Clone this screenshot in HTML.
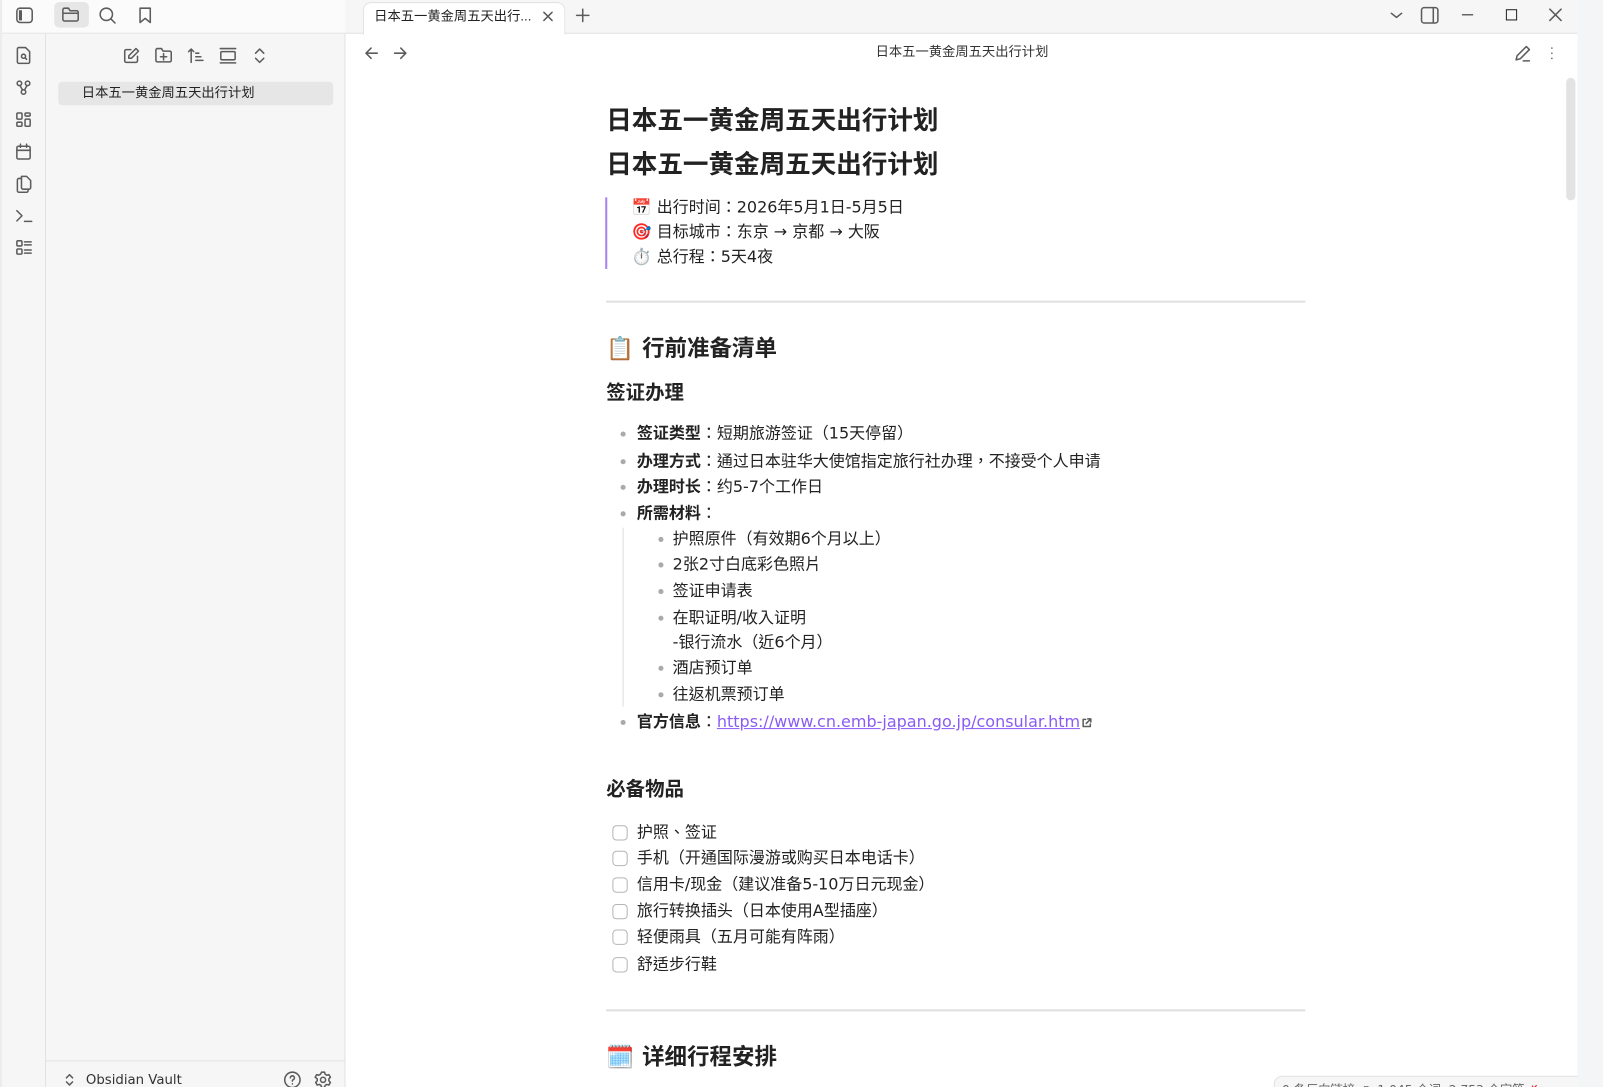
<!DOCTYPE html>
<html><head><meta charset="utf-8">
<style>
*{margin:0;padding:0;box-sizing:border-box}
html,body{width:1603px;height:1087px;overflow:hidden;background:#f4f5f7}
body{font-family:"DejaVu Sans","Noto Sans CJK TC",sans-serif;color:#222}
#w{position:absolute;left:0;top:0;width:1568px;height:1063px;transform:scale(1.02232,1.02258);transform-origin:0 0}
.a{position:absolute}
.win{left:0;top:0;width:1543px;height:1063px;background:#fff;overflow:hidden}
svg{position:absolute;fill:none;stroke:#5c5c5c;stroke-width:1.5;stroke-linecap:round;stroke-linejoin:round}
.t{position:absolute;white-space:nowrap;font-size:15.65px;line-height:20px;color:#222}
.ui{font-family:"Liberation Sans","Noto Sans CJK SC",sans-serif}
.h1{font-size:25px;font-weight:bold;line-height:34px;color:#222}
.h2{font-size:22px;font-weight:bold;line-height:30px}
.h3{font-size:19px;font-weight:bold;line-height:26px}
.dot{position:absolute;width:5px;height:5px;border-radius:50%;background:#aaa}
.cb{position:absolute;width:15px;height:15px;border:1px solid #b5b5b5;border-radius:4px;background:#fff}
b{font-weight:bold}
</style></head><body>
<div id="w">
<div class="a win">
 <div class="a" style="left:0;top:0;width:1543px;height:33px;background:#f6f6f6;border-bottom:1px solid #e2e2e2"></div>
 <div class="a" style="left:0;top:0;width:338px;height:33px;background:#fbfbfb;border-bottom:1px solid #e2e2e2"></div>
 <div class="a" style="left:0;top:33px;width:45px;height:1030px;background:#f6f6f6;border-right:1px solid #e2e2e2"></div>
 <div class="a" style="left:0;top:0;width:2px;height:1063px;background:#ececec"></div>
 <div class="a" style="left:45px;top:33px;width:293px;height:1030px;background:#f6f6f6;border-right:1px solid #e2e2e2"></div>
 <div class="a" style="left:45px;top:1037px;width:293px;height:1px;background:#e2e2e2"></div>
 <div class="a" style="left:53px;top:2px;width:34px;height:25px;background:#e6e6e6;border-radius:5px"></div>
 <svg style="left:15px;top:6px" width="18" height="18" viewBox="0 0 18 18"><rect x="1.5" y="2" width="15" height="14" rx="3"/><rect x="3.5" y="4" width="3" height="10" fill="#5c5c5c" stroke="none"/></svg>
 <svg style="left:60px;top:6px" width="18" height="16" viewBox="0 0 18 16"><path d="M1.5 3.5v9.5a1.5 1.5 0 0 0 1.5 1.5h12a1.5 1.5 0 0 0 1.5-1.5V6a1.5 1.5 0 0 0-1.5-1.5H8.5L7 2H3a1.5 1.5 0 0 0-1.5 1.5zM1.5 7h15"/></svg>
 <svg style="left:96px;top:6px" width="18" height="18" viewBox="0 0 18 18"><circle cx="8" cy="8" r="6"/><path d="M12.5 12.5l4 4"/></svg>
 <svg style="left:134px;top:6px" width="16" height="18" viewBox="0 0 16 18"><path d="M3 2h10v14l-5-4-5 4z"/></svg>
 <svg style="left:15px;top:45px" width="16" height="18" viewBox="0 0 16 18"><path d="M3 1.5h7l4 4v10a1.5 1.5 0 0 1-1.5 1.5h-9A1.5 1.5 0 0 1 2 15.5V3a1.5 1.5 0 0 1 1-1.5z"/><circle cx="8" cy="10" r="2"/><path d="M9.5 11.5l1.5 1.5"/></svg>
 <svg style="left:15px;top:78px" width="16" height="16" viewBox="0 0 16 16"><circle cx="4" cy="3.5" r="2.2"/><circle cx="12" cy="3.5" r="2.2"/><circle cx="8" cy="12" r="2.2"/><path d="M4.5 5.5l2.5 4.5M11.5 5.5l-2.5 4.5"/></svg>
 <svg style="left:15px;top:109px" width="16" height="16" viewBox="0 0 16 16"><rect x="1.5" y="1.5" width="5" height="6" rx="1"/><rect x="9.5" y="1.5" width="5" height="3" rx="1"/><rect x="1.5" y="10.5" width="5" height="4" rx="1"/><rect x="9.5" y="7.5" width="5" height="7" rx="1"/></svg>
 <svg style="left:15px;top:140px" width="16" height="17" viewBox="0 0 16 17"><rect x="1.5" y="3" width="13" height="12.5" rx="1.5"/><path d="M5 1v3M11 1v3M1.5 7h13"/></svg>
 <svg style="left:15px;top:171px" width="17" height="18" viewBox="0 0 17 18"><path d="M6 3.5h-2.5A1.5 1.5 0 0 0 2 5v10.5a1.5 1.5 0 0 0 1.5 1.5H11a1.5 1.5 0 0 0 1.5-1.5V14"/><path d="M6 1.5h5l4 4v7a1.5 1.5 0 0 1-1.5 1.5H7.5A1.5 1.5 0 0 1 6 12.5z"/></svg>
 <svg style="left:15px;top:204px" width="18" height="14" viewBox="0 0 18 14"><path d="M1.5 2l5 5-5 5M9 12.5h7"/></svg>
 <svg style="left:15px;top:234px" width="17" height="16" viewBox="0 0 17 16"><rect x="1.5" y="1.5" width="5" height="5" rx="1"/><rect x="1.5" y="9.5" width="5" height="5" rx="1"/><path d="M9 2.5h6.5M9 5.5h6.5M9 10.5h6.5M9 13.5h6.5"/></svg>
 <svg style="left:120px;top:46px" width="17" height="17" viewBox="0 0 17 17"><path d="M8 2.5H3.5a1.5 1.5 0 0 0-1.5 1.5v9.5a1.5 1.5 0 0 0 1.5 1.5H13a1.5 1.5 0 0 0 1.5-1.5V9"/><path d="M13 1.5l2.5 2.5-7 7H6v-2.5z"/></svg>
 <svg style="left:151px;top:46px" width="18" height="16" viewBox="0 0 18 16"><path d="M1.5 3v10a1.5 1.5 0 0 0 1.5 1.5h12a1.5 1.5 0 0 0 1.5-1.5V5.5A1.5 1.5 0 0 0 15 4H8.5L7 1.5H3A1.5 1.5 0 0 0 1.5 3zM9 6.5v6M6 9.5h6"/></svg>
 <svg style="left:183px;top:46px" width="17" height="17" viewBox="0 0 17 17"><path d="M4 15V2M1.5 4.5L4 2l2.5 2.5M8.5 6h3M8.5 9.5h5M8.5 13h7"/></svg>
 <svg style="left:214px;top:46px" width="18" height="17" viewBox="0 0 18 17"><path d="M1.5 1.5h15M1.5 15.5h15"/><rect x="2" y="4.5" width="14" height="8" rx="1"/></svg>
 <svg style="left:247px;top:46px" width="14" height="17" viewBox="0 0 14 17"><path d="M3 6l4-4 4 4M3 11l4 4 4-4"/></svg>
 <div class="a" style="left:57px;top:80px;width:269px;height:23px;background:#e6e6e6;border-radius:4px"></div>
 <div class="t ui" style="left:80px;top:81px;font-size:13px;line-height:20px">日本五一黄金周五天出行计划</div>
 <svg style="left:62px;top:1049px" width="12" height="14" viewBox="0 0 12 14" stroke="#999"><path d="M3 5l3-3 3 3M3 9l3 3 3-3"/></svg>
 <div class="t" style="left:84px;top:1047px;font-size:13px;color:#333">Obsidian Vault</div>
 <svg style="left:277px;top:1047px" width="18" height="18" viewBox="0 0 18 18"><circle cx="9" cy="9" r="7.5"/><path d="M7 7a2 2 0 1 1 2.5 2c-.5.2-.5.7-.5 1.2M9 12.8v.2"/></svg>
 <svg style="left:307px;top:1047px" width="18" height="18" viewBox="0 0 18 18"><circle cx="9" cy="9" r="2.5"/><path d="M7.5 1.5h3l.5 2 1.7 1 2-.6 1.5 2.6-1.5 1.5v2l1.5 1.5-1.5 2.6-2-.6-1.7 1-.5 2h-3l-.5-2-1.7-1-2 .6-1.5-2.6 1.5-1.5v-2L1.3 6.5l1.5-2.6 2 .6 1.7-1z"/></svg>
 <div class="a" style="left:355px;top:2px;width:198px;height:32px;background:#fff;border:1px solid #e2e2e2;border-bottom:none;border-radius:8px 8px 0 0"></div>
 <div class="t ui" style="left:366px;top:6px;font-size:13px">日本五一黄金周五天出行...</div>
 <svg style="left:530px;top:10px" width="12" height="12" viewBox="0 0 12 12"><path d="M2 2l8 8M10 2l-8 8"/></svg>
 <svg style="left:563px;top:8px" width="14" height="14" viewBox="0 0 14 14" stroke="#888"><path d="M7 1v12M1 7h12"/></svg>
 <svg style="left:1359px;top:10px" width="14" height="10" viewBox="0 0 14 10" stroke="#777"><path d="M2 3l5 4 5-4"/></svg>
 <svg style="left:1389px;top:6px" width="19" height="18" viewBox="0 0 19 18" stroke="#777"><rect x="1.5" y="1.5" width="16" height="15" rx="2.5"/><path d="M13 2v14"/></svg>
 <div class="a" style="left:1430px;top:14px;width:11px;height:1.3px;background:#222"></div>
 <div class="a" style="left:1473px;top:9px;width:11px;height:11px;border:1.3px solid #222"></div>
 <svg style="left:1515px;top:8px" width="13" height="13" viewBox="0 0 13 13" stroke="#222" stroke-width="1.3"><path d="M1 1l11 11M12 1L1 12"/></svg>
 <svg style="left:356px;top:45px" width="15" height="14" viewBox="0 0 15 14" stroke="#888"><path d="M13 7H2M7 2L2 7l5 5"/></svg>
 <svg style="left:384px;top:45px" width="15" height="14" viewBox="0 0 15 14" stroke="#888"><path d="M2 7h11M8 2l5 5-5 5"/></svg>
 <div class="t ui" style="left:841px;top:41px;width:200px;text-align:center;font-size:13px;color:#333">日本五一黄金周五天出行计划</div>
 <svg style="left:1481px;top:44px" width="17" height="17" viewBox="0 0 17 17" stroke="#777"><path d="M12 1.5l3 3-9 9-4 1 1-4zM9 15.5h6"/></svg>
 <svg style="left:1514px;top:44px" width="8" height="16" viewBox="0 0 8 16" stroke="#666" stroke-width="2"><path d="M4 3v.1M4 8v.1M4 13v.1"/></svg>
 <div class="a" style="left:1532px;top:76px;width:9px;height:120px;background:#e3e3e3;border-radius:5px"></div>

 <div class="t h1" style="left:593px;top:101px">日本五一黄金周五天出行计划</div>
 <div class="t h1" style="left:593px;top:144px">日本五一黄金周五天出行计划</div>
 <div class="a" style="left:592px;top:193px;width:2px;height:70px;background:#a882f0"></div>
 <div class="t" style="left:618px;top:193px">📅 出行时间：2026年5月1日-5月5日</div>
 <div class="t" style="left:618px;top:217px">🎯 目标城市：东京 → 京都 → 大阪</div>
 <div class="t" style="left:618px;top:241px">⏱️ 总行程：5天4夜</div>
 <div class="a" style="left:593px;top:294px;width:684px;height:2px;background:#e0e0e0"></div>
 <div class="t h2" style="left:593px;top:327px">📋 行前准备清单</div>
 <div class="t h3" style="left:593px;top:371px">签证办理</div>

 <div class="dot" style="left:607px;top:422px"></div><div class="t" style="left:623px;top:414px"><b>签证类型</b>：短期旅游签证（15天停留）</div>
 <div class="dot" style="left:607px;top:449px"></div><div class="t" style="left:623px;top:441px"><b>办理方式</b>：通过日本驻华大使馆指定旅行社办理，不接受个人申请</div>
 <div class="dot" style="left:607px;top:474px"></div><div class="t" style="left:623px;top:466px"><b>办理时长</b>：约5-7个工作日</div>
 <div class="dot" style="left:607px;top:500px"></div><div class="t" style="left:623px;top:492px"><b>所需材料</b>：</div>
 <div class="a" style="left:609px;top:516px;width:1px;height:175px;background:#ddd"></div>
 <div class="dot" style="left:644px;top:525px"></div><div class="t" style="left:658px;top:517px">护照原件（有效期6个月以上）</div>
 <div class="dot" style="left:644px;top:550px"></div><div class="t" style="left:658px;top:542px">2张2寸白底彩色照片</div>
 <div class="dot" style="left:644px;top:576px"></div><div class="t" style="left:658px;top:568px">签证申请表</div>
 <div class="dot" style="left:644px;top:602px"></div><div class="t" style="left:658px;top:594px">在职证明/收入证明</div>
 <div class="t" style="left:658px;top:618px">-银行流水（近6个月）</div>
 <div class="dot" style="left:644px;top:651px"></div><div class="t" style="left:658px;top:643px">酒店预订单</div>
 <div class="dot" style="left:644px;top:677px"></div><div class="t" style="left:658px;top:669px">往返机票预订单</div>
 <div class="dot" style="left:607px;top:704px"></div><div class="t" style="left:623px;top:696px"><b>官方信息</b>：<span style="color:#8a5cf5;text-decoration:underline">https://www.cn.emb-japan.go.jp/consular.htm</span></div>
 <svg style="left:1057px;top:701px" width="12" height="12" viewBox="0 0 12 12" stroke="#999" stroke-width="1"><path d="M5 2.5H2.5v7h7V7M7 2h3v3M10 2L5.5 6.5"/></svg>

 <div class="t h3" style="left:593px;top:759px">必备物品</div>
 <div class="cb" style="left:599px;top:807px"></div><div class="t" style="left:623px;top:804px">护照、签证</div>
 <div class="cb" style="left:599px;top:832px"></div><div class="t" style="left:623px;top:829px">手机（开通国际漫游或购买日本电话卡）</div>
 <div class="cb" style="left:599px;top:858px"></div><div class="t" style="left:623px;top:855px">信用卡/现金（建议准备5-10万日元现金）</div>
 <div class="cb" style="left:599px;top:884px"></div><div class="t" style="left:623px;top:881px">旅行转换插头（日本使用A型插座）</div>
 <div class="cb" style="left:599px;top:909px"></div><div class="t" style="left:623px;top:906px">轻便雨具（五月可能有阵雨）</div>
 <div class="cb" style="left:599px;top:936px"></div><div class="t" style="left:623px;top:933px">舒适步行鞋</div>
 <div class="a" style="left:593px;top:987px;width:684px;height:2px;background:#e0e0e0"></div>
 <div class="t h2" style="left:593px;top:1020px">🗓️ 详细行程安排</div>

 <div class="a" style="left:1246px;top:1052px;width:300px;height:20px;background:#f6f6f6;border:1px solid #e2e2e2;border-radius:8px 0 0 0"></div>
 <div class="t" style="left:1254px;top:1056px;font-size:12px;color:#666">0 条反向链接 &nbsp;▯ &nbsp;1,045 个词 &nbsp;2,753 个字符 <span style="color:#e33">✗</span></div>
</div>
</div>
</body></html>
